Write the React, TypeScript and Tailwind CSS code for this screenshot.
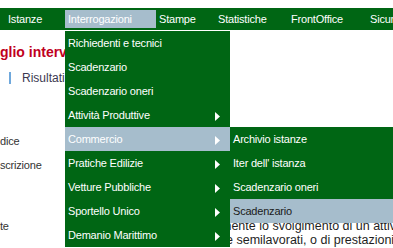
import React from "react";

const topItems = [
  { label: "Istanze", w: "w-[60px]" },
  { label: "Interrogazioni", w: "w-[91px]", active: true },
  { label: "Stampe", w: "w-[59px]" },
  { label: "Statistiche", w: "w-[73px]" },
  { label: "FrontOffice", w: "w-[79px]" },
  { label: "Sicurezza", w: "w-[80px]" },
];

const menuItems = [
  { label: "Richiedenti e tecnici" },
  { label: "Scadenzario" },
  { label: "Scadenzario oneri" },
  { label: "Attività Produttive", sub: true },
  { label: "Commercio", sub: true, open: true },
  { label: "Pratiche Edilizie", sub: true },
  { label: "Vetture Pubbliche", sub: true },
  { label: "Sportello Unico", sub: true },
  { label: "Demanio Marittimo", sub: true },
];

const subItems = [
  { label: "Archivio istanze" },
  { label: "Iter dell' istanza" },
  { label: "Scadenzario oneri" },
  { label: "Scadenzario", hover: true },
];

const Arrow = () => (
  <svg width="5" height="9" viewBox="0 0 5 9" className="mt-[3px]">
    <path d="M0 0 L5 4.5 L0 9 Z" fill="#ffffff" />
  </svg>
);

export default function App() {
  return (
    <div className="relative w-[393px] h-[248px] overflow-hidden bg-white font-['Liberation_Sans',Arial,sans-serif] text-[11px] tracking-[-0.2px]">
      <div className="h-[8px]" />

      {/* Top navigation */}
      <nav className="h-[22px] bg-[#006614] pt-[2px] pl-[5px] flex whitespace-nowrap">
        {topItems.map((it) => (
          <div
            key={it.label}
            className={`${it.w} shrink-0 h-[18px] pl-[3px] flex items-center text-white ${it.active ? "bg-[#a6bdcc]" : ""}`}
          >
            {it.label}
          </div>
        ))}
      </nav>

      {/* Page content behind the menu */}
      <div className="grid grid-cols-[221px_1fr] text-[#333333]">
        <div>
          <h1 className="mt-[12px] h-[20px] leading-[20px] text-[14px] font-bold text-[#c0001e] whitespace-nowrap tracking-normal">
            glio intervento
          </h1>
          <div className="mt-[9px] h-[14px] flex items-center whitespace-nowrap">
            <span className="ml-[9px] w-[2px] h-[12px] bg-[#6fa8dc]" />
            <span className="ml-[11px] text-[#3b3950] text-[12px] tracking-normal">Risultati</span>
          </div>
          <div className="mt-[49px] h-[14px] leading-[14px]">dice</div>
          <div className="mt-[10px] h-[14px] leading-[14px]">scrizione</div>
          <div className="mt-[47px] h-[14px] leading-[14px]">te</div>
        </div>
        <div className="pt-[189px] text-[12.5px] leading-[14px] text-[#1e1e1e] whitespace-nowrap tracking-normal">
          <div>mente lo svolgimento di un attività</div>
          <div className="ml-[5px]">e semilavorati, o di prestazioni</div>
        </div>
      </div>

      {/* Dropdown menu */}
      <div className="absolute left-[65px] top-[31px] w-[165px] bg-[#006614]">
        {menuItems.map((it) => (
          <div
            key={it.label}
            className={`relative h-[24px] pl-[3px] pr-[10px] flex items-center justify-between text-white whitespace-nowrap ${it.open ? "bg-[#a6bdcc]" : ""}`}
          >
            <span>{it.label}</span>
            {it.sub && <Arrow />}
            {it.open && (
              <div className="absolute left-full top-0 w-[170px] bg-[#006614]">
                {subItems.map((s) => (
                  <div
                    key={s.label}
                    className={`h-[24px] pl-[3px] flex items-center ${s.hover ? "bg-[#a6bdcc] text-[#1a1a1a]" : "text-white"}`}
                  >
                    {s.label}
                  </div>
                ))}
              </div>
            )}
          </div>
        ))}
      </div>
    </div>
  );
}
